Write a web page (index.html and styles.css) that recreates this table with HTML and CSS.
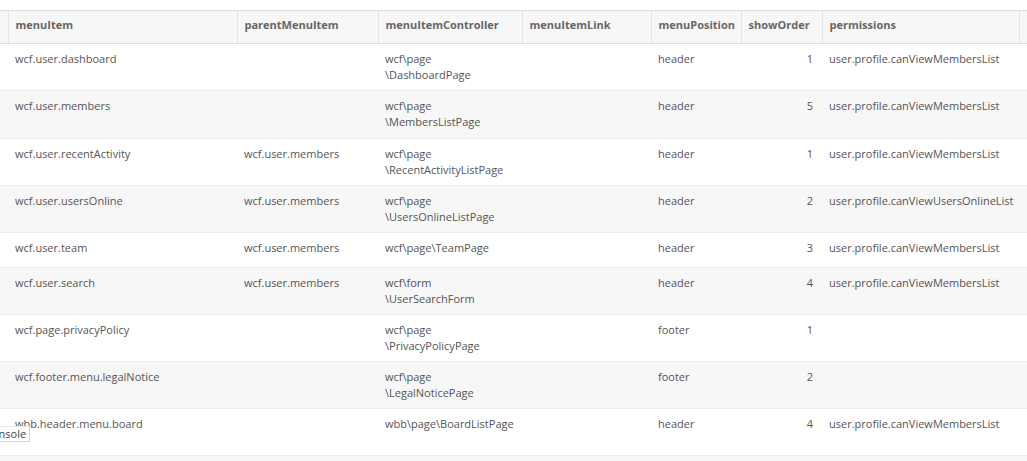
FILE: index.html
```html
<!DOCTYPE html>
<html>
<head>
<meta charset="utf-8">
<link rel="stylesheet" href="styles.css">
</head>
<body>
<div class="page">
<table class="grid">
<colgroup>
<col class="c-sel"><col class="c-item"><col class="c-parent"><col class="c-ctrl"><col class="c-link"><col class="c-pos"><col class="c-order"><col class="c-perm"><col class="c-more">
</colgroup>
<thead>
<tr><th></th><th>menuItem</th><th>parentMenuItem</th><th>menuItemController</th><th>menuItemLink</th><th>menuPosition</th><th>showOrder</th><th>permissions</th><th></th></tr>
</thead>
<tbody>
<tr><td></td><td>wcf.user.dashboard</td><td></td><td>wcf\page<br>\DashboardPage</td><td></td><td>header</td><td class="num">1</td><td>user.profile.canViewMembersList</td><td></td></tr>
<tr class="tall"><td></td><td>wcf.user.members</td><td></td><td>wcf\page<br>\MembersListPage</td><td></td><td>header</td><td class="num">5</td><td>user.profile.canViewMembersList</td><td></td></tr>
<tr><td></td><td>wcf.user.recentActivity</td><td>wcf.user.members</td><td>wcf\page<br>\RecentActivityListPage</td><td></td><td>header</td><td class="num">1</td><td>user.profile.canViewMembersList</td><td></td></tr>
<tr><td></td><td>wcf.user.usersOnline</td><td>wcf.user.members</td><td>wcf\page<br>\UsersOnlineListPage</td><td></td><td>header</td><td class="num">2</td><td>user.profile.canViewUsersOnlineList</td><td></td></tr>
<tr><td></td><td>wcf.user.team</td><td>wcf.user.members</td><td>wcf\page\TeamPage</td><td></td><td>header</td><td class="num">3</td><td>user.profile.canViewMembersList</td><td></td></tr>
<tr><td></td><td>wcf.user.search</td><td>wcf.user.members</td><td>wcf\form<br>\UserSearchForm</td><td></td><td>header</td><td class="num">4</td><td>user.profile.canViewMembersList</td><td></td></tr>
<tr><td></td><td>wcf.page.privacyPolicy</td><td></td><td>wcf\page<br>\PrivacyPolicyPage</td><td></td><td>footer</td><td class="num">1</td><td></td><td></td></tr>
<tr><td></td><td>wcf.footer.menu.legalNotice</td><td></td><td>wcf\page<br>\LegalNoticePage</td><td></td><td>footer</td><td class="num">2</td><td></td><td></td></tr>
<tr><td></td><td>wbb.header.menu.board</td><td></td><td>wbb\page\BoardListPage<br>&nbsp;</td><td></td><td>header</td><td class="num">4</td><td>user.profile.canViewMembersList</td><td></td></tr>
<tr><td></td><td>&nbsp;</td><td></td><td></td><td></td><td></td><td></td><td></td><td></td></tr>
</tbody>
</table>
<div class="console">Console</div>
</div>
</body>
</html>
```

FILE: styles.css
```css
html, body {
  margin: 0;
  padding: 0;
  overflow: hidden;
  background: #fff;
}
.page {
  position: relative;
  padding-top: 10px;
  font-family: "Open Sans", "Liberation Sans", sans-serif;
  font-size: 11px;
  color: #555;
}
.grid {
  border-collapse: collapse;
  table-layout: fixed;
  width: 1049px;
}
.c-sel { width: 8px; }
.c-item { width: 229px; }
.c-parent { width: 141px; }
.c-ctrl { width: 144px; }
.c-link { width: 129px; }
.c-pos { width: 90px; }
.c-order { width: 81px; }
.c-perm { width: 197px; }
.c-more { width: 30px; }
.grid th {
  background: #f7f7f7;
  border-top: 1px solid #ddd;
  border-bottom: 1px solid #ddd;
  border-left: 1px solid #e3e3e3;
  color: #666;
  font-weight: 700;
  text-align: left;
  padding: 6px 7px 10px 7px;
  line-height: 16px;
  height: 16px;
  white-space: nowrap;
  overflow: hidden;
}
.grid th:first-child { border-left: none; }
.grid td {
  padding: 7px 7px 7px 7px;
  line-height: 16px;
  height: 20px;
  vertical-align: top;
  white-space: nowrap;
  border-bottom: 1px solid #ececec;
}
.grid tr.tall td { padding-bottom: 8px; }
.grid tbody tr:nth-child(even) td { background: #f7f7f7; }
.grid td.num { text-align: right; padding-right: 9px; }
.console {
  position: absolute;
  left: -19px;
  top: 426px;
  padding: 0 3px;
  line-height: 14px;
  background: #fff;
  border: 1px solid #d6d6d6;
  border-top-color: #e6e6e6;
  color: #444;
  font-size: 11px;
}
```
